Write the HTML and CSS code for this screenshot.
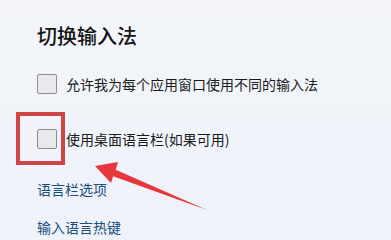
FILE: index.html
```html
<!DOCTYPE html>
<html lang="zh">
<head>
<meta charset="utf-8">
<link rel="stylesheet" href="styles.css">
</head>
<body>
<div class="page">
  <h1 class="title">切换输入法</h1>
  <label class="row row-first"><span class="box"></span><span class="label">允许我为每个应用窗口使用不同的输入法</span></label>
  <label class="row row-second"><span class="box"></span><span class="label">使用桌面语言栏(如果可用)</span></label>
  <a class="link link-first">语言栏选项</a>
  <a class="link link-second">输入语言热键</a>
  <div class="highlight"></div>
  <svg class="arrow" width="391" height="240" viewBox="0 0 391 240">
    <polygon points="95,166 118,162 115.7,169.8 207,210 113.1,176.3 111,183" fill="#e6383b"/>
  </svg>
</div>
</body>
</html>
```
FILE: styles.css
```css
html, body {
  margin: 0;
  padding: 0;
  background: #eff2f8;
}
.page {
  position: relative;
  width: 391px;
  height: 240px;
  overflow: hidden;
  box-sizing: border-box;
  padding: 22px 0 0 37px;
  display: flex;
  flex-direction: column;
  align-items: flex-start;
  font-family: "Noto Sans CJK SC", "Noto Sans", sans-serif;
  color: #1b1b1b;
  background: linear-gradient(180deg, #f3f5f9 0%, #eef2f9 100%);
}
.title {
  margin: 0;
  font-size: 20px;
  line-height: 28px;
  font-weight: 500;
  color: #141414;
}
.row {
  display: flex;
  align-items: center;
  gap: 9px;
  height: 20px;
}
.row-first { margin-top: 24px; }
.row-second { margin-top: 35px; }
.box {
  width: 18px;
  height: 18px;
  border: 1px solid #8c8c8e;
  border-radius: 2px;
  background: #e9e9eb;
}
.label {
  font-size: 14px;
  line-height: 20px;
}
.link {
  font-size: 14px;
  line-height: 20px;
  color: #1c4f7c;
}
.link-first { margin-top: 30px; }
.link-second { margin-top: 18px; }
.highlight {
  position: absolute;
  left: 16px;
  top: 112px;
  width: 41px;
  height: 45px;
  border: 4px solid #cf4444;
}
.arrow {
  position: absolute;
  left: 0;
  top: 0;
}
```
